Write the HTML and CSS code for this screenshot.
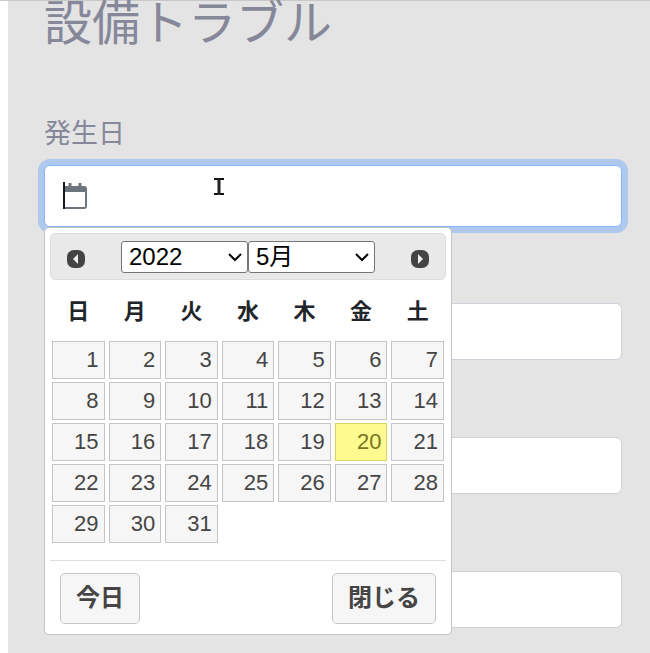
FILE: index.html
```html
<!DOCTYPE html>
<html lang="ja">
<head>
<meta charset="utf-8">
<meta name="viewport" content="width=device-width, initial-scale=1">
<title>設備トラブル</title>
<link rel="stylesheet" href="styles.css">
</head>
<body>
<main class="page">
  <form class="form">
    <h1 class="title">設備トラブル</h1>
    <label class="label" for="date">発生日</label>
    <div class="date-field">
      <input class="input input-focused" id="date" type="text">
      <svg class="field-icon" width="25" height="28" viewBox="0 0 25 28" aria-hidden="true">
        <path d="M7 1v5M17 1v5" stroke="#6c757d" stroke-width="3"/>
        <path d="M1 10V4h20q3 0 3 3v17q0 3-3 3H1z" fill="#6c757d"/>
        <path d="M2 10h20v15H2z" fill="#fff"/>
        <path d="M0 0h2v27H0z" fill="#15191d"/>
      </svg>
      <svg class="pointer" width="12" height="20" viewBox="0 0 12 20" aria-hidden="true">
        <path d="M1 2h4l1 1 1-1h4M1 17h4l1-1 1 1h4" fill="none" stroke="#111" stroke-width="2"/>
        <path d="M6 2v15" stroke="#222" stroke-width="3"/>
      </svg>
      <div class="picker">
        <div class="picker-header">
          <button class="nav" type="button" aria-label="前">
            <svg width="20" height="20" viewBox="0 0 20 20"><rect x="1" y="1" width="18" height="18" rx="7" fill="#444"/><path d="M12 5v10l-5-5z" fill="#ededed"/></svg>
          </button>
          <div class="selects">
            <span class="select-wrap">
              <select class="select" aria-label="年"><option>2022</option></select>
              <svg class="chevron" width="14" height="10" viewBox="0 0 14 10"><path d="M1 2l6 6 6-6" fill="none" stroke="#000" stroke-width="2"/></svg>
            </span>
            <span class="select-wrap">
              <select class="select" aria-label="月"><option>5月</option></select>
              <svg class="chevron" width="14" height="10" viewBox="0 0 14 10"><path d="M1 2l6 6 6-6" fill="none" stroke="#000" stroke-width="2"/></svg>
            </span>
          </div>
          <button class="nav" type="button" aria-label="次">
            <svg width="20" height="20" viewBox="0 0 20 20"><rect x="1" y="1" width="18" height="18" rx="7" fill="#444"/><path d="M8 5v10l5-5z" fill="#ededed"/></svg>
          </button>
        </div>
        <table class="calendar">
          <thead>
            <tr><th>日</th><th>月</th><th>火</th><th>水</th><th>木</th><th>金</th><th>土</th></tr>
          </thead>
          <tbody>
            <tr><td><a class="day" href="#">1</a></td><td><a class="day" href="#">2</a></td><td><a class="day" href="#">3</a></td><td><a class="day" href="#">4</a></td><td><a class="day" href="#">5</a></td><td><a class="day" href="#">6</a></td><td><a class="day" href="#">7</a></td></tr>
            <tr><td><a class="day" href="#">8</a></td><td><a class="day" href="#">9</a></td><td><a class="day" href="#">10</a></td><td><a class="day" href="#">11</a></td><td><a class="day" href="#">12</a></td><td><a class="day" href="#">13</a></td><td><a class="day" href="#">14</a></td></tr>
            <tr><td><a class="day" href="#">15</a></td><td><a class="day" href="#">16</a></td><td><a class="day" href="#">17</a></td><td><a class="day" href="#">18</a></td><td><a class="day" href="#">19</a></td><td><a class="day day-today" href="#">20</a></td><td><a class="day" href="#">21</a></td></tr>
            <tr><td><a class="day" href="#">22</a></td><td><a class="day" href="#">23</a></td><td><a class="day" href="#">24</a></td><td><a class="day" href="#">25</a></td><td><a class="day" href="#">26</a></td><td><a class="day" href="#">27</a></td><td><a class="day" href="#">28</a></td></tr>
            <tr><td><a class="day" href="#">29</a></td><td><a class="day" href="#">30</a></td><td><a class="day" href="#">31</a></td><td></td><td></td><td></td><td></td></tr>
          </tbody>
        </table>
        <div class="picker-footer">
          <button class="button" type="button">今日</button>
          <button class="button" type="button">閉じる</button>
        </div>
      </div>
    </div>
    <div class="fields">
      <input class="input" type="text" aria-label="項目2">
      <input class="input" type="text" aria-label="項目3">
      <input class="input" type="text" aria-label="項目4">
    </div>
  </form>
</main>
</body>
</html>
```
FILE: styles.css
```css
* { box-sizing: border-box; }

html { overflow: hidden; }

body {
  margin: 0;
  background: #fff;
  font-family: "Liberation Sans", "Noto Sans CJK JP", sans-serif;
  color: #212529;
}

.page {
  border-top: 1px solid #c8c8c8;
  padding-left: 8px;
}

.form {
  min-height: 100vh;
  padding: 0 28px 26px 36px;
  background: #e4e4e4;
}

.title {
  margin: 0;
  font-size: 48px;
  line-height: 46px;
  font-weight: 400;
  color: #868899;
}

.label {
  display: block;
  margin: 69px 0 13px;
  font-size: 27px;
  line-height: 36px;
  color: #868899;
}

.date-field { position: relative; }

.input {
  display: block;
  width: 100%;
  height: 57px;
  border: 1px solid #ced0da;
  border-radius: 6px;
  padding: 0 18px;
  background: #fff;
  font: inherit;
  font-size: 26px;
  outline: 0;
}

.input-focused {
  height: 62px;
  border-color: #86b7fe;
  box-shadow: 0 0 0 6px #aec8ee;
}

.field-icon {
  position: absolute;
  left: 19px;
  top: 17px;
}

.pointer {
  position: absolute;
  left: 169px;
  top: 12px;
}

.fields {
  display: grid;
  gap: 77px;
  margin-top: 76px;
}

.picker {
  position: absolute;
  z-index: 1;
  left: 0;
  top: 62px;
  width: 408px;
  padding: 5px;
  border: 1px solid #c5c5c5;
  border-radius: 5px;
  background: #fff;
}

.picker-header {
  display: flex;
  align-items: center;
  justify-content: space-between;
  height: 47px;
  padding: 0 15px;
  border: 1px solid #ddd;
  border-radius: 5px;
  background: #e9e9e9;
}

.nav {
  display: flex;
  padding: 4px 0 0;
  border: 0;
  background: none;
}

.selects { display: flex; }

.select-wrap {
  display: grid;
  align-items: center;
  width: 127px;
}

.select {
  grid-area: 1 / 1;
  appearance: none;
  width: 100%;
  height: 32px;
  padding: 0 7px;
  border: 1px solid #767676;
  border-radius: 3px;
  background: #fff;
  color: #000;
  font: inherit;
  font-size: 24px;
  line-height: 30px;
}

.chevron {
  grid-area: 1 / 1;
  justify-self: end;
  margin-right: 6px;
  pointer-events: none;
}

.calendar {
  width: 100%;
  table-layout: fixed;
  border-collapse: collapse;
  font-size: 22px;
}

.calendar th {
  height: 60px;
  padding: 4px 0 0;
  line-height: 24px;
}

.calendar td { padding: 1px 2px 2px; }

.day {
  display: block;
  height: 38px;
  padding: 0 5px;
  border: 1px solid #c5c5c5;
  background: #f6f6f6;
  color: #454545;
  line-height: 35px;
  text-align: right;
  text-decoration: none;
}

.day-today {
  border-color: #dad55e;
  background: #fffa90;
  color: #777620;
}

.picker-footer {
  display: flex;
  justify-content: space-between;
  margin-top: 15px;
  padding: 12px 10px 5px;
  border-top: 1px solid #ddd;
}

.button {
  height: 51px;
  padding: 0 15px 6px;
  border: 1px solid #c5c5c5;
  border-radius: 5px;
  background: #f6f6f6;
  color: #454545;
  font: inherit;
  font-size: 24px;
  font-weight: 700;
}
```
